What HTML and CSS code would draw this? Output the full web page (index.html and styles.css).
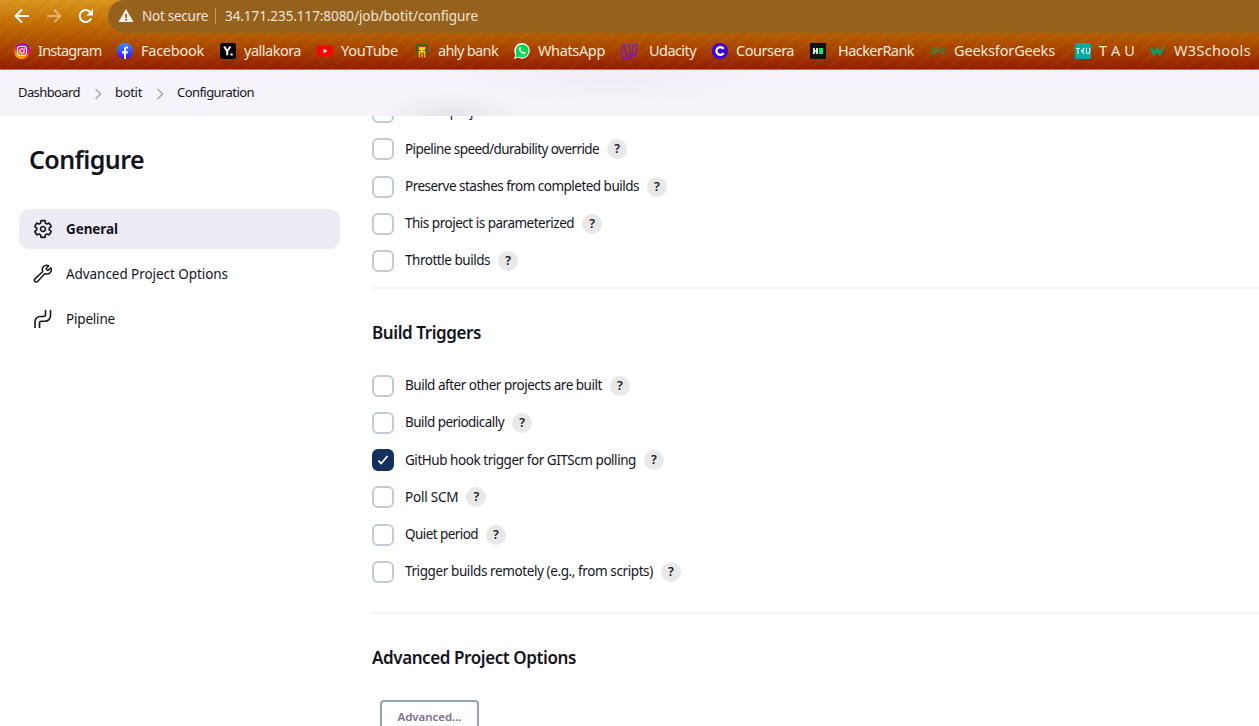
FILE: index.html
```html
<!DOCTYPE html>
<html lang="en">
<head>
<meta charset="utf-8">
<title>botit Config [Jenkins]</title>
<link rel="stylesheet" href="styles.css">
</head>
<body>
<header class="browser">
  <div class="toolbar">
    <div class="nav">
      <svg width="16" height="16" viewBox="0 0 16 16"><path d="M15 8H2M8 1.500 1.600 8 8 14.500"/></svg>
      <svg class="disabled" width="16" height="16" viewBox="0 0 16 16"><path d="M1 8h13M8 1.500 14.400 8 8 14.500"/></svg>
      <svg width="16" height="16" viewBox="0 0 16 16"><path d="M13.200 10.500A6 6 0 1 1 12.500 4.300"/><path class="solid" d="M15 1v6.500H8.500z"/></svg>
    </div>
    <div class="address">
      <svg width="16" height="14" viewBox="0 0 16 14"><path fill="#f8f3ec" d="M8 0 15.500 13H.5z"/><path fill="#96611d" d="M7.200 5h1.700v4H7.200zM7.200 10h1.700v1.700H7.200z"/></svg>
      <span class="insecure">Not secure</span>
      <span class="url">34.171.235.117:8080/job/botit/configure</span>
    </div>
  </div>
  <nav class="bookmarks">
    <a class="instagram"><svg viewBox="0 0 16 16"><defs><linearGradient id="ig" x1="0.200" y1="1" x2="0.600" y2="0"><stop offset="0" stop-color="#ffd400"/><stop offset=".35" stop-color="#ff6a00"/><stop offset=".65" stop-color="#f00075"/><stop offset="1" stop-color="#a000f0"/></linearGradient></defs><circle cx="8" cy="8" r="8" fill="url(#ig)"/><rect x="3.500" y="3.500" width="9" height="9" rx="2.500" fill="none" stroke="#fff" stroke-width="1.100"/><circle cx="8" cy="8" r="2.200" fill="none" stroke="#fff" stroke-width="1.100"/><circle cx="10.700" cy="5.300" r=".6" fill="#fff"/></svg><span>Instagram</span></a>
    <a class="facebook"><svg viewBox="0 0 16 16"><defs><linearGradient id="fb" x2="0" y2="1"><stop stop-color="#3390ff"/><stop offset="1" stop-color="#3c10f0"/></linearGradient></defs><circle cx="8" cy="8" r="8" fill="url(#fb)"/><path fill="#fff" d="M7 16v-5.500H5V8.200h2V6.500C7 4.300 8.300 3.300 11 3.600v2H9.900c-.8 0-1 .4-1 1v1.600H11l-.4 2.300H8.900V16z"/></svg><span>Facebook</span></a>
    <a class="yallakora"><svg viewBox="0 0 16 16"><rect width="16" height="16" rx="3" fill="#000"/><path d="m4.200 3.500 3 4.700v4M10.500 3.500 7.200 8.200" fill="none" stroke="#fff" stroke-width="2"/><circle cx="11.600" cy="11.400" r="1.200" fill="#fff"/></svg><span>yallakora</span></a>
    <a class="youtube"><svg viewBox="0 0 16 16"><rect y="2.500" width="16" height="11" rx="2.500" fill="#f00"/><path d="M6.500 5.800 10.500 8l-4 2.200z" fill="#fff"/></svg><span>YouTube</span></a>
    <a class="ahly"><svg viewBox="0 0 16 16"><path d="M2.800 12.500V2.200h10.400v10.300" fill="none" stroke="#276c31" stroke-width="1.700"/><path fill="#ffdc00" d="M5 4h6v3H9v1h2.500v1.500h-7V8H7V7H5z"/><path d="M5.400 9v5.500M8 9v5.500M10.600 9v5.500" stroke="#ffb800" stroke-width="1.300"/></svg><span>ahly bank</span></a>
    <a class="whatsapp"><svg viewBox="0 0 16 16"><path fill="#fff" d="M8.200 0a7.800 7.800 0 1 1-4 14.600L0 16l1.400-4.200A7.800 7.800 0 0 1 8.200 0z"/><circle cx="8.200" cy="7.900" r="6.500" fill="#00d94a"/><path fill="#00d94a" d="m2.300 10.500 3 3-3.600 1z"/><path d="M5.500 4.800c-.6 2 2.800 6.400 5.700 5.700" fill="none" stroke="#fff" stroke-width="1.500"/><path d="m5.300 4.500 1.300 1.700M9.400 9.400l2 .9" stroke="#fff" stroke-width="2"/></svg><span>WhatsApp</span></a>
    <a class="udacity"><svg viewBox="0 0 16 16"><path d="M4.500 1.500.8 3.600v6.900c0 3.300 2.200 5 5 5 2.400 0 4-1 4.800-2.900M4.500 1.500v8.400c0 1.900 1.300 2.900 3 2.900h3.100c2.900 0 4.900-1.800 4.900-4.600V.8l-3.800 2.100v7.300c0 1.600-.5 2.600-1.100 2.600s-1.400-.8-1.400-2.300V1.900L6.500 3" fill="none" stroke="#7415e0" stroke-width="1.100"/></svg><span>Udacity</span></a>
    <a class="coursera"><svg viewBox="0 0 16 16"><circle cx="8" cy="8" r="8" fill="#3c00dc"/><path d="M11.600 5.900a3.900 3.900 0 1 0 0 4.200" fill="none" stroke="#fff" stroke-width="2.300"/></svg><span>Coursera</span></a>
    <a class="hackerrank"><svg viewBox="0 0 16 16"><path fill="#0e141e" d="M0 0h16v16H0z"/><path d="M4 5v6M7 5v6M4 8h3" stroke="#fff" stroke-width="1.700"/><path fill="#00ee64" d="M9 5h4v6H9z"/></svg><span>HackerRank</span></a>
    <a class="geeks"><svg viewBox="0 0 16 16"><path d="M2 6.200c1.800-1.500 4.600-.6 4.600 1.800 0 3.400-4.800 3.600-5 .4h13c-.2 3.200-5 3-5-.4 0-2.400 2.800-3.300 4.600-1.800" fill="none" stroke="#16943e" stroke-width="1.200"/></svg><span>GeeksforGeeks</span></a>
    <a class="tau"><svg viewBox="0 0 16 16"><path fill="#00ada1" d="M0 0h16v16H0z"/><path d="M1 5.500h4M3 5.500V11M9.300 5 6.500 8l2.800 3M6 8h3M11.500 5v4.500q0 1.200 1.600 1.200t1.600-1.200V5" fill="none" stroke="#e9fffb" stroke-width="1.100"/></svg><span>T A U</span></a>
    <a class="w3"><svg viewBox="0 0 16 16"><path d="m1.300 4.600 3 6.200 2.500-4.600 3 4.600 2.300-4.400" fill="none" stroke="#09a067" stroke-width="2.700"/><path d="M13 3h2l-1.200 1.700q1.600 0 1.300 1.100t-2 .6" fill="none" stroke="#09a067" stroke-width=".8"/></svg><span>W3Schools</span></a>
  </nav>
</header>

<nav class="crumbs">
  <a class="c1">Dashboard</a>
  <svg width="8" height="12" viewBox="0 0 8 12"><path d="m1.500 1 5 5-5 5"/></svg>
  <a class="c2">botit</a>
  <svg width="8" height="12" viewBox="0 0 8 12"><path d="m1.500 1 5 5-5 5"/></svg>
  <a class="c3">Configuration</a>
</nav>

<div class="page">
  <aside class="sidebar">
    <h1>Configure</h1>
    <a class="task active"><svg viewBox="0 0 512 512"><path stroke-width="42" d="M262.290 192.310a64 64 0 1 0 57.400 57.400 64.130 64.130 0 0 0-57.400-57.400zM416.390 256a154.340 154.340 0 0 1-1.530 20.790l45.210 35.460a10.810 10.810 0 0 1 2.450 13.750l-42.770 74a10.810 10.810 0 0 1-13.140 4.590l-44.900-18.080a16.110 16.110 0 0 0-15.170 1.750A164.480 164.480 0 0 1 325 400.800a15.940 15.940 0 0 0-8.820 12.140l-6.730 47.890a11.080 11.080 0 0 1-10.680 9.170h-85.540a11.110 11.110 0 0 1-10.690-8.870l-6.720-47.820a16.070 16.070 0 0 0-9-12.220 155.300 155.300 0 0 1-21.460-12.570 16 16 0 0 0-15.110-1.710l-44.890 18.070a10.810 10.810 0 0 1-13.140-4.580l-42.770-74a10.800 10.800 0 0 1 2.450-13.750l38.210-30a16.050 16.050 0 0 0 6-14.080c-.36-4.170-.58-8.330-.58-12.500s.21-8.270.58-12.350a16 16 0 0 0-6.070-13.940l-38.190-30A10.810 10.810 0 0 1 49.480 186l42.770-74a10.810 10.810 0 0 1 13.140-4.590l44.900 18.080a16.110 16.110 0 0 0 15.170-1.750A164.480 164.480 0 0 1 187 111.200a15.940 15.940 0 0 0 8.820-12.140l6.730-47.890A11.080 11.080 0 0 1 213.230 42h85.540a11.110 11.110 0 0 1 10.690 8.870l6.720 47.820a16.070 16.070 0 0 0 9 12.220 155.300 155.300 0 0 1 21.460 12.570 16 16 0 0 0 15.110 1.710l44.890-18.070a10.810 10.810 0 0 1 13.140 4.580l42.770 74a10.800 10.800 0 0 1-2.450 13.750l-38.210 30a16.050 16.050 0 0 0-6.050 14.080c.33 4.140.55 8.300.55 12.470z"/></svg><span class="t1">General</span></a>
    <a class="task"><svg viewBox="0 0 512 512"><path stroke-width="38" d="M461 104c-2-5-8-6-12-2l-58 57a18 18 0 0 1-25 0l-23-23a18 18 0 0 1 0-26l57-57c4-4 2-10-3-12-41-18-94-9-128 24-29 29-38 75-21 118 2 6 1 12-3 16L64 368c-37 33-37 58-15 80s47 22 80-15l170-181c4-4 10-5 16-3 43 16 89 7 118-21 34-34 44-83 28-124z"/></svg><span class="t2">Advanced Project Options</span></a>
    <a class="task"><svg viewBox="0 0 20 20"><path stroke-width="1.600" d="M2 19v-6.500a5 5 0 0 1 5-5h3.500a2 2 0 0 0 2-2V1M6.500 19v-4.700a2 2 0 0 1 2-2H12a5.500 5.500 0 0 0 5.500-5.500V1"/></svg><span class="t3">Pipeline</span></a>
  </aside>
  <main class="content">
    <section class="general">
      <div class="row"><i class="box"></i><span class="r0">GitHub project</span></div>
      <div class="row"><i class="box"></i><span class="r1">Pipeline speed/durability override</span><b>?</b></div>
      <div class="row"><i class="box"></i><span class="r2">Preserve stashes from completed builds</span><b>?</b></div>
      <div class="row"><i class="box"></i><span class="r3">This project is parameterized</span><b>?</b></div>
      <div class="row"><i class="box"></i><span class="r4">Throttle builds</span><b>?</b></div>
    </section>
    <section class="triggers">
      <h2>Build Triggers</h2>
      <div class="row"><i class="box"></i><span class="r5">Build after other projects are built</span><b>?</b></div>
      <div class="row"><i class="box"></i><span class="r6">Build periodically</span><b>?</b></div>
      <div class="row"><i class="box checked"><svg width="12" height="12" viewBox="0 0 12 12"><path d="m1.500 6.700 2.700 2.800L10.500 2"/></svg></i><span class="r7">GitHub hook trigger for GITScm polling</span><b>?</b></div>
      <div class="row"><i class="box"></i><span class="r8">Poll SCM</span><b>?</b></div>
      <div class="row"><i class="box"></i><span class="r9">Quiet period</span><b>?</b></div>
      <div class="row"><i class="box"></i><span class="r10">Trigger builds remotely (e.g., from scripts)</span><b>?</b></div>
    </section>
    <section>
      <h2>Advanced Project Options</h2>
      <button>Advanced...</button>
    </section>
  </main>
</div>
</body>
</html>
```
FILE: styles.css
```css
* { box-sizing: border-box; }
body {
  margin: 0;
  height: 726px;
  overflow: hidden;
  background: #fff;
  color: #14141f;
  font: 13.5px/20px "Noto Sans", sans-serif;
}
svg { flex: none; display: block; }

/* Browser chrome */
.browser {
  position: relative;
  z-index: 2;
  height: 70px;
  border-bottom: 1px solid #c17c45;
  background:
    repeating-linear-gradient(140deg, rgba(255, 190, 40, .05) 0 2px, transparent 4px 7px, rgba(110, 20, 0, .04) 9px 11px),
    linear-gradient(#db9620 0, #c57407 20px, #b45a00 36px, #a33a02 54px, #941a00 69px);
}
.toolbar { display: flex; height: 33px; }
.nav {
  display: flex;
  gap: 16px;
  width: 108px;
  padding: 8px 0 0 14px;
}
.nav path { fill: none; stroke: #fff; stroke-width: 2; }
.nav .solid { fill: #fff; stroke: none; }
.nav .disabled { opacity: .42; }
.address {
  display: flex;
  flex: 1;
  align-items: center;
  padding: 0 0 1px 10px;
  border-radius: 17px 0 0 17px;
  background: #96611d;
  color: #f0e5d6;
}
.insecure {
  width: 74px;
  margin-left: 8px;
  line-height: 16px;
  border-right: 1px solid #bd9765;
  letter-spacing: -.26px;
  white-space: nowrap;
}
.url { margin-left: 9px; letter-spacing: -.07px; }
.bookmarks {
  display: grid;
  grid-template-columns: 103px 103px 97px 97px 100px 107px 91px 98px 120px 145px 75px 109px;
  align-items: center;
  height: 34px;
  padding-left: 14px;
  color: #ffe9d8;
  font-size: 14.5px;
}
.bookmarks a { display: flex; gap: 8px; white-space: nowrap; }
.bookmarks svg { width: 16px; height: 16px; margin-top: 3px; }
.bookmarks .udacity, .bookmarks .hackerrank { gap: 12px; }
.instagram { letter-spacing: -.78px; }
.facebook { letter-spacing: -.25px; }
.yallakora { letter-spacing: -.5px; }
.youtube { letter-spacing: -.23px; }
.ahly { letter-spacing: -.64px; }
.whatsapp { letter-spacing: -.36px; }
.udacity { letter-spacing: -.57px; }
.coursera { letter-spacing: -.48px; }
.hackerrank { letter-spacing: -.56px; }
.geeks { letter-spacing: -.15px; }
.tau { letter-spacing: .11px; }
.w3 { letter-spacing: .34px; }

/* Breadcrumbs */
.crumbs {
  position: relative;
  z-index: 1;
  display: flex;
  align-items: center;
  height: 46px;
  padding: 0 0 2px 18px;
  background:
    radial-gradient(ellipse 75px 26px at 452px 48px, rgba(60, 55, 70, .1), rgba(60, 55, 70, .04) 50%, transparent),
    radial-gradient(ellipse 180px 38px at 610px 0, rgba(60, 55, 70, .035), transparent),
    #f6f4fa;
  font-size: 13px;
}
.crumbs svg { margin: 3px 13px 0 14px; fill: none; stroke: #a9a6b8; stroke-width: 1.5; }
.c1 { width: 62px; letter-spacing: -.59px; }
.c2 { width: 27px; letter-spacing: -.32px; }
.c3 { letter-spacing: -.56px; }

/* Page */
.page { display: flex; height: 610px; }
.sidebar { width: 340px; padding: 27px 0 0 19px; }
.sidebar h1 {
  margin: 0 0 34px 10px;
  font-size: 25px;
  line-height: 32px;
  font-weight: 600;
  letter-spacing: -.59px;
}
.task {
  display: flex;
  align-items: center;
  gap: 13px;
  height: 40px;
  margin-bottom: 5px;
  padding-left: 14px;
  border-radius: 10px;
}
.task svg { width: 20px; height: 20px; fill: none; stroke: #14141f; stroke-linejoin: round; }
.active { background: #eeebf4; font-weight: 700; }
.t1 { letter-spacing: -.08px; }
.t2 { letter-spacing: -.06px; }
.t3 { letter-spacing: -.19px; }

.content { flex: 1; margin: -23px 0 0 32px; }
.general { height: 196px; padding-top: .4px; border-bottom: 2px solid #f3f2f8; }
.general .row { height: 37.3px; }
.triggers { height: 325px; border-bottom: 2px solid #f3f2f8; }
h2 {
  margin: 0;
  padding: 32px 0 30px;
  font-size: 17px;
  line-height: 24px;
  font-weight: 600;
  letter-spacing: -.41px;
}
.triggers h2 { padding-bottom: 22.3px; }
.row { display: flex; align-items: center; height: 37.2px; white-space: nowrap; }
.row span { margin: -1.5px 8px 0 11px; }
.box {
  display: flex;
  align-items: center;
  justify-content: center;
  width: 22px;
  height: 22px;
  border: 2px solid #c2cbd4;
  border-radius: 6px;
}
.checked { border-color: #14305e; background: #14305e; }
.checked path { fill: none; stroke: #fff; stroke-width: 1.8; }
.row b {
  width: 20px;
  height: 20px;
  border-radius: 50%;
  background: #e8e8e8;
  font-size: 12.5px;
  font-weight: 600;
  text-align: center;
}
.r0 { letter-spacing: -.5px; }
.r1 { letter-spacing: -.58px; }
.r2 { letter-spacing: -.52px; }
.r3 { letter-spacing: -.49px; }
.r4 { letter-spacing: -.47px; }
.r5 { letter-spacing: -.49px; }
.r6 { letter-spacing: -.54px; }
.r7 { letter-spacing: -.46px; }
.r8 { letter-spacing: -.2px; }
.r9 { letter-spacing: -.57px; }
.r10 { letter-spacing: -.4px; }
button {
  display: block;
  width: 99px;
  height: 34px;
  margin-left: 8px;
  padding: 0;
  border: 2px solid #99a3ae;
  border-radius: 4px;
  background: #fff;
  color: #7b6c92;
  font: 600 11.5px/20px "Noto Sans", sans-serif;
  letter-spacing: -.05px;
}
```
